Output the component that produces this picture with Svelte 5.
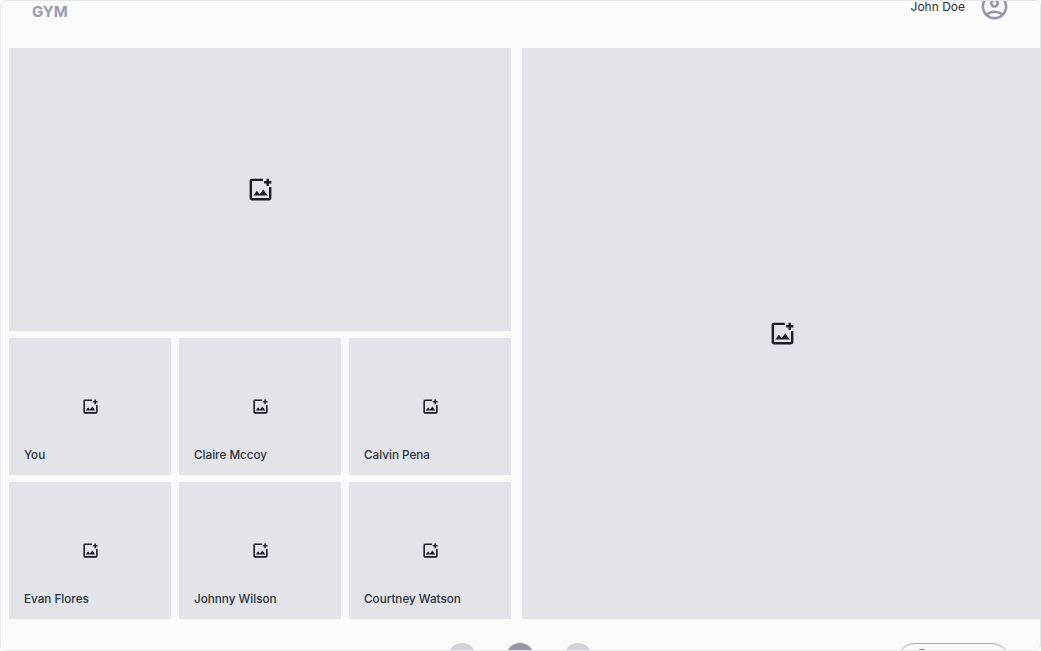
<script>
  const people = ['You', 'Claire Mccoy', 'Calvin Pena', 'Evan Flores', 'Johnny Wilson', 'Courtney Watson'];
  const photo = 'M200-120q-33 0-56.5-23.5T120-200v-560q0-33 23.5-56.5T200-840h360v80H200v560h560v-360h80v360q0 33-23.5 56.5T760-120H200Zm40-160h480L570-480 450-320l-90-120-120 160Zm440-320v-80h-80v-80h80v-80h80v80h80v80h-80v80h-80Z';
</script>

<div class="frame">
  <header class="header">
    <div class="logo">GYM</div>
    <div class="user">
      <span class="name">John Doe</span>
      <svg class="avatar" viewBox="0 0 24 24" aria-hidden="true"><path d="M12 2C6.48 2 2 6.48 2 12s4.48 10 10 10 10-4.48 10-10S17.52 2 12 2zM7.35 18.5C8.66 17.56 10.26 17 12 17s3.34.56 4.65 1.5c-1.31.94-2.91 1.5-4.65 1.5s-3.34-.56-4.65-1.5zm10.79-1.38C16.45 15.8 14.32 15 12 15s-4.45.8-6.14 2.12C4.7 15.73 4 13.95 4 12c0-4.42 3.58-8 8-8s8 3.58 8 8c0 1.95-.7 3.73-1.86 5.12zM12 6c-1.93 0-3.5 1.57-3.5 3.5S10.07 13 12 13s3.5-1.57 3.5-3.5S13.93 6 12 6zm0 5c-.83 0-1.5-.67-1.5-1.5S11.17 8 12 8s1.5.67 1.5 1.5S12.83 11 12 11z" /></svg>
    </div>
  </header>

  <main class="main">
    <section class="left">
      <div class="tile large">
        <svg class="icon big" viewBox="0 -960 960 960" aria-hidden="true"><path d={photo} /></svg>
      </div>
      <div class="people">
        {#each people as person}
          <div class="tile small">
            <svg class="icon" viewBox="0 -960 960 960" aria-hidden="true"><path d={photo} /></svg>
            <span class="label">{person}</span>
          </div>
        {/each}
      </div>
    </section>
    <section class="tile right">
      <svg class="icon big" viewBox="0 -960 960 960" aria-hidden="true"><path d={photo} /></svg>
    </section>
  </main>

  <footer class="footer">
    <div class="controls">
      <span class="dot"></span>
      <span class="dot active"></span>
      <span class="dot"></span>
    </div>
    <div class="pill"><span class="pill-icon"></span></div>
  </footer>
</div>

<style>
  :global(body) {
    margin: 0;
    background: #fff;
  }
  .frame {
    box-sizing: border-box;
    height: 651px;
    border: 1px solid #e5e7eb;
    border-radius: 6px;
    background: #f9fafa;
    overflow: hidden;
    font-family: Inter, "Liberation Sans", sans-serif;
    color: #2b303b;
  }
  .header {
    box-sizing: border-box;
    height: 47px;
    display: flex;
    justify-content: space-between;
    align-items: flex-start;
    padding: 0 33px 0 31px;
  }
  .logo {
    font-size: 15px;
    line-height: 20px;
    font-weight: 700;
    color: #9a9cab;
    margin-top: 1px;
  }
  .user {
    display: flex;
    align-items: flex-start;
    gap: 14px;
  }
  .name {
    font-size: 12px;
    line-height: 12px;
  }
  .avatar {
    width: 31px;
    height: 31px;
    margin: -10px -3px 0 0;
    fill: #9596a6;
  }
  .main {
    display: grid;
    grid-template-columns: 502px 1fr;
    gap: 11px;
    height: 571px;
    margin-right: -2px;
    padding-left: 8px;
  }
  .left {
    display: flex;
    flex-direction: column;
    gap: 7px;
  }
  .tile {
    position: relative;
    display: flex;
    align-items: center;
    justify-content: center;
    background: #e3e4e9;
  }
  .large {
    height: 283px;
  }
  .people {
    display: grid;
    grid-template-columns: repeat(3, 1fr);
    grid-auto-rows: 137px;
    gap: 7px 8px;
  }
  .icon {
    width: 19px;
    height: 19px;
    fill: #1a1d26;
  }
  .big {
    width: 29px;
    height: 29px;
  }
  .label {
    position: absolute;
    left: 15px;
    bottom: 13px;
    font-size: 11.7px;
    line-height: 14px;
    font-weight: 500;
  }
  .footer {
    display: grid;
    grid-template-columns: 1fr auto 1fr;
    padding-top: 24px;
  }
  .controls {
    grid-column: 2;
    display: flex;
    gap: 30px;
    margin-right: 2px;
  }
  .dot {
    width: 28px;
    height: 28px;
    border-radius: 50%;
    background: #d1d3da;
  }
  .active {
    background: #9596a6;
  }
  .pill {
    grid-column: 3;
    justify-self: end;
    box-sizing: border-box;
    width: 113px;
    height: 36px;
    margin-right: 30px;
    border: 1px solid #a9abb5;
    border-radius: 18px;
    padding: 5px 0 0 17px;
  }
  .pill-icon {
    display: block;
    width: 14px;
    height: 14px;
    border-radius: 50%;
    background: #6b7280;
  }
</style>
